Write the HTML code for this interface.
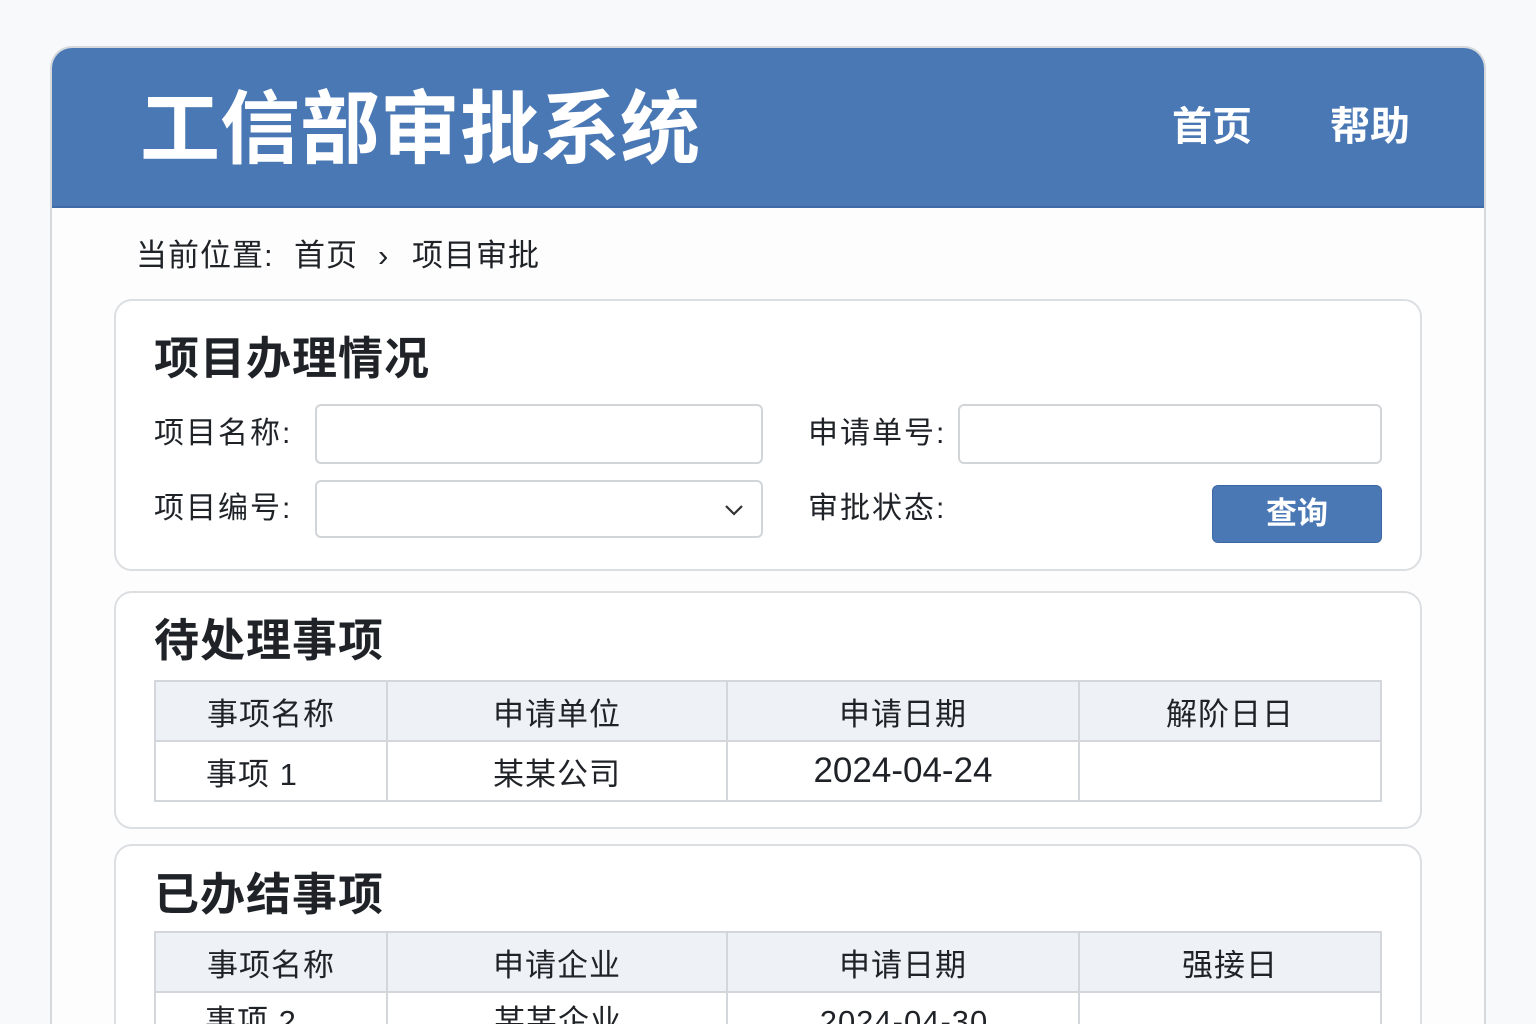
<!DOCTYPE html>
<html><head><meta charset="utf-8"><style>
*{margin:0;padding:0;box-sizing:border-box}
html,body{width:1536px;height:1024px;overflow:hidden}
body{background:#f8f9fa;font-family:"Liberation Sans","Noto Sans CJK SC",sans-serif;color:#1f2328;position:relative}
.abs{position:absolute}
.wrap{left:50px;top:46px;width:1436px;height:978px;background:#fdfdfd;border:2px solid #d6d9dc;border-bottom:none;border-radius:22px 22px 0 0;overflow:hidden}
.hdr{left:0;top:0;width:1436px;height:160px;background:#4a78b5;border-bottom:2px solid #3f6aa5}
.title{left:88px;top:32px;font-size:80px;font-weight:bold;color:#fff;line-height:100px}
.nav{top:54px;font-size:40px;font-weight:bold;color:#fff;line-height:50px}
.card{left:114px;width:1308px;background:#fff;border:2px solid #dcdfe2;border-radius:18px}
.h2{font-size:45px;font-weight:bold;line-height:54px;color:#1f2328;letter-spacing:1px}
.lbl{font-size:30px;line-height:40px;color:#1f2328;letter-spacing:2px}
.inp{border:2px solid #d2d5d8;border-radius:6px;background:#fff}
table{position:absolute;border-collapse:collapse;font-size:31px;text-align:center;letter-spacing:1px}
td{border:2px solid #d3d6da;height:60px}
tr.h td{background:#eef2f7}
.num{font-size:35px;letter-spacing:0}
.cell{font-size:31px;letter-spacing:1px;line-height:40px;text-align:center}
</style></head><body>
<div class="abs wrap">
 <div class="abs hdr">
  <div class="abs title">工信部审批系统</div>
  <div class="abs nav" style="left:1120px">首页</div>
  <div class="abs nav" style="left:1278px">帮助</div>
 </div>
</div>
<div class="abs lbl" style="left:136px;top:236px;font-size:31px;letter-spacing:1px">当前位置:</div>
<div class="abs lbl" style="left:294px;top:236px;font-size:31px;letter-spacing:1px">首页</div>
<div class="abs lbl" style="left:378px;top:236px;font-size:31px">›</div>
<div class="abs lbl" style="left:412px;top:236px;font-size:31px;letter-spacing:1px">项目审批</div>

<div class="abs card" style="top:299px;height:272px"></div>
<div class="abs h2" style="left:154px;top:332px">项目办理情况</div>
<div class="abs lbl" style="left:154px;top:414px">项目名称:</div>
<div class="abs inp" style="left:315px;top:404px;width:448px;height:60px"></div>
<div class="abs lbl" style="left:808px;top:414px">申请单号:</div>
<div class="abs inp" style="left:958px;top:404px;width:424px;height:60px"></div>
<div class="abs lbl" style="left:154px;top:489px">项目编号:</div>
<div class="abs inp" style="left:315px;top:480px;width:448px;height:58px"></div>
<svg class="abs" style="left:724px;top:503px" width="20" height="14"><path d="M2 3 L10 11 L18 3" fill="none" stroke="#333" stroke-width="2.2"/></svg>
<div class="abs lbl" style="left:808px;top:489px">审批状态:</div>
<div class="abs" style="left:1212px;top:485px;width:170px;height:58px;background:#4a78b5;border:1px solid #3d67a3;border-radius:6px;color:#fff;font-size:31px;font-weight:bold;text-align:center;line-height:56px">查询</div>

<div class="abs card" style="top:591px;height:238px"></div>
<div class="abs h2" style="left:154px;top:614px">待处理事项</div>
<table style="left:154px;top:680px;width:1228px">
<tr class="h"><td style="width:232px">事项名称</td><td style="width:340px">申请单位</td><td style="width:352px">申请日期</td><td>解阶日日</td></tr>
<tr><td style="text-align:left;padding-left:50px">事项 1</td><td>某某公司</td><td class="num">2024-04-24</td><td></td></tr>
</table>

<div class="abs card" style="top:844px;height:200px"></div>
<div class="abs h2" style="left:154px;top:868px">已办结事项</div>
<table style="left:154px;top:931px;width:1228px">
<tr class="h"><td style="width:232px">事项名称</td><td style="width:340px">申请企业</td><td style="width:352px">申请日期</td><td>强接日</td></tr>
<tr><td></td><td></td><td></td><td></td></tr>
</table>
<div class="abs cell" style="left:205px;top:1002px">事项 2</div>
<div class="abs cell" style="left:388px;top:1002px;width:340px">某某企业</div>
<div class="abs cell num" style="left:728px;top:1002px;width:352px">2024-04-30</div>
</body></html>
